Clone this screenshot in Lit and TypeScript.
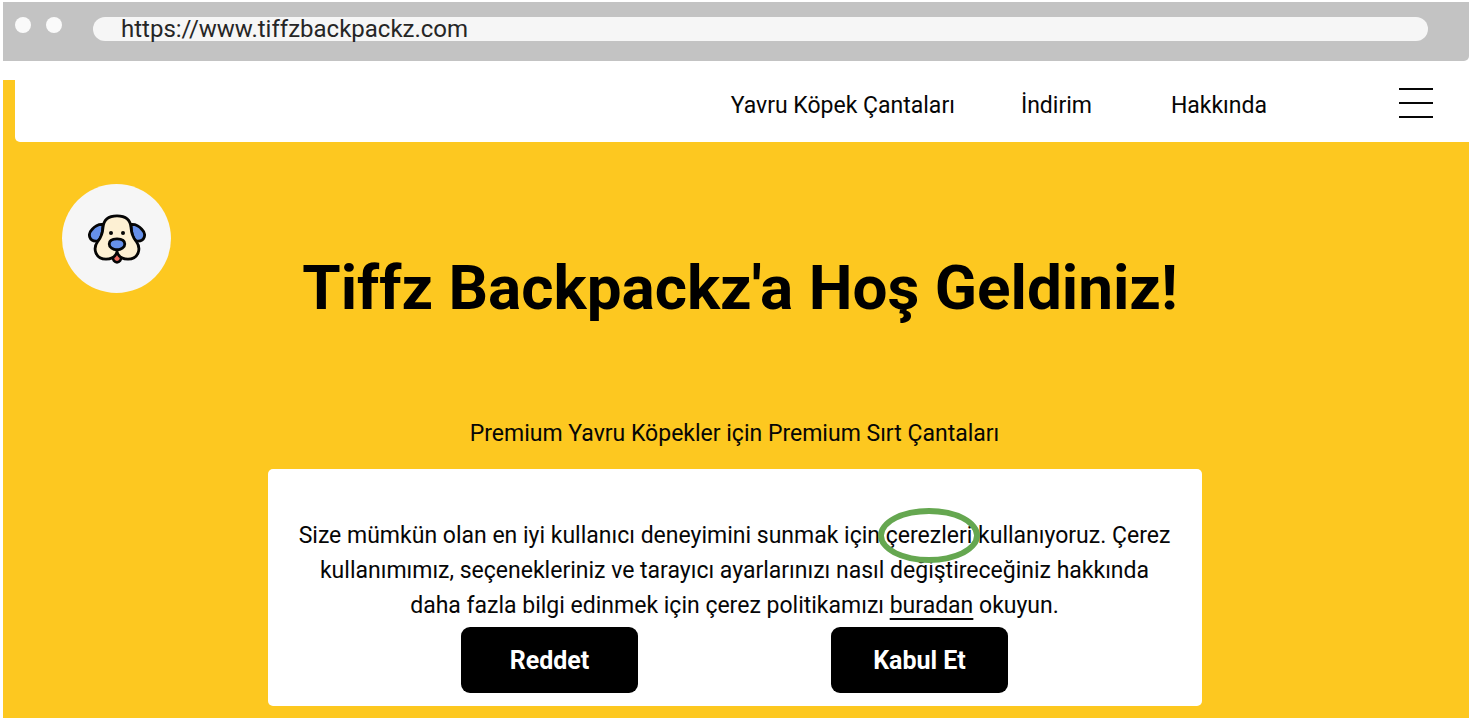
import { LitElement, html, css } from "lit";
import { customElement } from "lit/decorators.js";

@customElement("puppy-logo")
export class PuppyLogo extends LitElement {
  static styles = css`
    :host {
      display: grid;
      place-items: center;
      width: 109px;
      height: 109px;
      border-radius: 50%;
      background: #f6f6f6;
    }
    svg {
      display: block;
      width: 58px;
      height: 50px;
    }
  `;

  render() {
    return html`
      <svg viewBox="0 0 58 50" role="img" aria-label="Tiffz Backpackz" stroke="#050505" stroke-width="2.8" stroke-linejoin="round" stroke-linecap="round">
        <path fill="#ee6a60" d="M24.6 42 C24.6 50.4 33.4 50.4 33.4 42 L29 38.5Z" />
        <path fill="#6690ea" d="M15 10.5 C11 10 7 12 4 15.5 C1.500 18 1 21 1.800 23.200 C3 26.500 6 27.600 10.500 26.800 C13.500 24 14.800 19 15 10.500Z" />
        <path fill="#6690ea" d="M43 10.5 C47 10 51 12 54 15.5 C56.500 18 57 21 56.200 23.200 C55 26.500 52 27.600 47.500 26.800 C44.500 24 43.200 19 43 10.500Z" />
        <path fill="#fdf0d3" d="M29 1.800 C20 1.800 15.600 6 15 13.500 C14.600 20 13 23.500 10 27 C4 35 8 45.200 18 45.200 C23 45.200 27 43 29 38.500 C31 43 35 45.200 40 45.200 C50 45.200 54 35 48 27 C45 23.500 43.400 20 43 13.500 C42.400 6 38 1.800 29 1.800Z" />
        <path fill="#6690ea" d="M29 24.800 C34 24.800 36.800 26.800 36.800 30 C36.800 33.500 33 35.800 29 35.800 C25 35.800 21.200 33.500 21.200 30 C21.200 26.800 24 24.800 29 24.800Z" />
        <path fill="none" d="M29 36V39" />
        <g stroke="none" fill="#050505">
          <circle cx="23" cy="19" r="2" />
          <circle cx="35" cy="19" r="2" />
        </g>
      </svg>
    `;
  }
}

@customElement("app-root")
export class AppRoot extends LitElement {
  static styles = css`
    :host {
      display: block;
      box-sizing: border-box;
      min-height: 100vh;
      padding: 2px 3px 3px;
      background: #fff;
      color: #060606;
      font-family: Roboto, "Liberation Sans", sans-serif;
      font-size: 23px;
      line-height: 35px;
    }
    * {
      box-sizing: border-box;
    }
    .browser {
      display: flex;
      flex-direction: column;
      min-height: calc(100vh - 5px);
    }
    .bar {
      display: flex;
      align-items: flex-start;
      height: 59px;
      padding: 15px 41px 0 12px;
      border-radius: 0 0 5px 0;
      background: #c3c3c3;
    }
    .dot {
      flex: none;
      width: 16px;
      height: 16px;
      margin-right: 15px;
      border-radius: 50%;
      background: #fafafa;
    }
    .address {
      display: flex;
      flex: 1;
      align-items: center;
      height: 24px;
      margin-left: 16px;
      border-radius: 12px;
      background: #f6f6f6;
    }
    .address input {
      flex: 1;
      min-width: 0;
      height: 32px;
      padding: 0 28px;
      border: 0;
      background: none;
      color: #262626;
      font: inherit;
      font-size: 24px;
    }
    .site {
      display: flex;
      flex: 1;
      flex-direction: column;
      margin-top: 19px;
      padding-bottom: 12px;
      background: #fdc820;
    }
    nav {
      display: flex;
      align-items: flex-start;
      justify-content: flex-end;
      gap: 66px;
      height: 62px;
      margin-left: 12px;
      padding: 8px 36px 0 0;
      border-radius: 0 0 0 5px;
      background: #fff;
    }
    nav a {
      min-width: 84px;
      color: inherit;
      text-decoration: none;
    }
    .menu {
      display: block;
      margin-left: 66px;
      padding: 0;
      border: 0;
      background: none;
      color: inherit;
    }
    .menu svg {
      display: block;
    }
    .hero {
      display: grid;
      grid-template-columns: 1fr auto 1fr;
      align-items: start;
      padding: 42px 51px 0 59px;
    }
    h1 {
      margin: 64px 0 0;
      color: #000;
      font-size: 62px;
      font-weight: 700;
      line-height: 80px;
    }
    main {
      padding-right: 3px;
    }
    .tagline {
      margin: 88px 0 0;
      text-align: center;
    }
    .cookies {
      width: 100%;
      max-width: 934px;
      margin: 18px auto 0;
      padding: 49px 28px 13px;
      border-radius: 5px;
      background: #fff;
      text-align: center;
    }
    .cookies p {
      margin: 0;
    }
    .ringed {
      position: relative;
    }
    .ringed::after {
      content: "";
      position: absolute;
      inset: -14px -8px;
      border: 6px solid #65a750;
      border-radius: 50%;
    }
    .cookies a {
      color: inherit;
      text-decoration-thickness: 2px;
      text-underline-offset: 5px;
    }
    .actions {
      display: flex;
      justify-content: center;
      gap: 193px;
      margin-top: 4px;
    }
    .actions button {
      width: 177px;
      height: 66px;
      padding: 0;
      border: 0;
      border-radius: 9px;
      background: #000;
      color: #fff;
      font: inherit;
      font-size: 25px;
      font-weight: 700;
    }
  `;

  render() {
    return html`
      <div class="browser">
        <div class="bar">
          <span class="dot"></span>
          <span class="dot"></span>
          <div class="address">
            <input type="text" aria-label="Adres" value="https://www.tiffzbackpackz.com" />
          </div>
        </div>
        <div class="site">
          <nav>
            <a href="#cantalar">Yavru Köpek Çantaları</a>
            <a href="#indirim">İndirim</a>
            <a href="#hakkinda">Hakkında</a>
            <button class="menu" aria-label="Menü">
              <svg width="34" height="30" viewBox="0 0 34 30" stroke="currentColor" stroke-width="2">
                <path d="M0 1H34M0 15H34M0 29H34" />
              </svg>
            </button>
          </nav>
          <header class="hero">
            <puppy-logo></puppy-logo>
            <h1>Tiffz Backpackz'a Hoş Geldiniz!</h1>
          </header>
          <main>
            <p class="tagline">Premium Yavru Köpekler için Premium Sırt Çantaları</p>
            <section class="cookies" aria-label="Çerezler">
              <p>
                Size mümkün olan en iyi kullanıcı deneyimini sunmak için
                <span class="ringed">çerezleri</span>
                kullanıyoruz. Çerez kullanımımız, seçenekleriniz ve tarayıcı ayarlarınızı nasıl
                değiştireceğiniz hakkında daha fazla bilgi edinmek için çerez politikamızı
                <a href="#politika">buradan</a> okuyun.
              </p>
              <div class="actions">
                <button>Reddet</button>
                <button>Kabul Et</button>
              </div>
            </section>
          </main>
        </div>
      </div>
    `;
  }
}
